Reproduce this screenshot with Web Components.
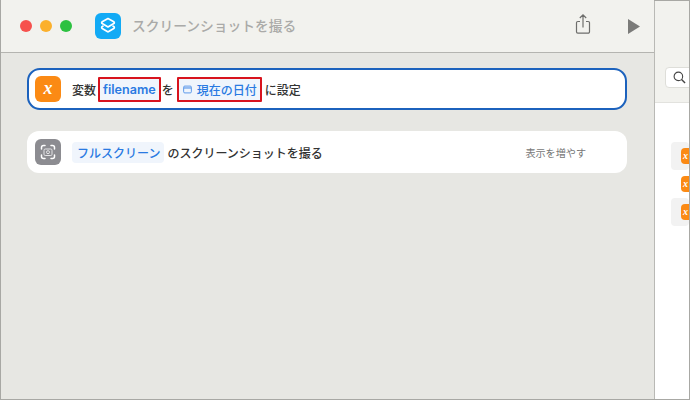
<!DOCTYPE html>
<html lang="ja"><head><meta charset="utf-8">
<style>
html,body{margin:0;padding:0;width:690px;height:400px;overflow:hidden;background:#e7e7e3}
body{font-family:Inter,"Noto Sans CJK JP",sans-serif}
</style></head><body>
<app-window>
  <title-bar slot="title" label="スクリーンショットを撮る"></title-bar>
  <action-card selected>
    <icon-tile slot="icon" color="#fb8a14">x</icon-tile>
    <span>変数</span>
    <var-token outlined style="margin-left:2px;--fs:12.6px;--fw:600">filename</var-token>
    <span style="margin-left:1px">を</span>
    <var-token outlined style="margin-left:3px;--pad-left:4px"><svg slot="lead" viewBox="0 0 10 10" width="9" height="9"><rect x=".7" y="1.2" width="8.6" height="7.6" rx="1.3" fill="none" stroke="#4d8fe8" stroke-width="1"/><path d="M1 3.3h8" stroke="#4d8fe8" stroke-width="1.2"/></svg>現在の日付</var-token>
    <span style="margin-left:3px">に設定</span>
  </action-card>
  <action-card more="表示を増やす">
    <svg slot="icon" viewBox="0 0 26 26" width="26" height="26"><rect width="26" height="26" rx="6" fill="#8c8c91"/><path d="M6.5 10V8.5a2 2 0 0 1 2-2H10M16 6.5h1.5a2 2 0 0 1 2 2V10M19.5 16v1.5a2 2 0 0 1-2 2H16M10 19.5H8.5a2 2 0 0 1-2-2V16" fill="none" stroke="#fff" stroke-width="1.5" stroke-linecap="round"/><rect x="9" y="10" width="8" height="6.5" rx="1.2" fill="none" stroke="#e4e4e6" stroke-width="1"/><circle cx="13" cy="13.2" r="1.5" fill="none" stroke="#e4e4e6" stroke-width="1"/></svg>
    <var-token style="--pad-left:5px;--pad-right:4px">フルスクリーン</var-token>
    <span style="margin-left:3px">のスクリーンショットを撮る</span>
  </action-card>
  <side-pane slot="side"></side-pane>
</app-window>
<script>
class AppWindow extends HTMLElement{constructor(){super();this.attachShadow({mode:'open'}).innerHTML=`<style>
:host{display:grid;grid-template-columns:653px 1fr;grid-template-rows:53px 1fr;width:690px;height:400px;box-sizing:border-box;border:1px solid #a8a8a4;background:#e7e7e3}
.title{grid-column:1/2;grid-row:1}
.main{grid-column:1;grid-row:2;display:flex;flex-direction:column;gap:21px;padding:14px 0 0 26px;box-sizing:border-box}
.side{grid-column:2;grid-row:1/3;border-left:1px solid #b9b9b5;min-width:0}
</style><div class="title"><slot name="title"></slot></div><div class="main"><slot></slot></div><div class="side"><slot name="side"></slot></div>`}}
class TitleBar extends HTMLElement{constructor(){super();this.attachShadow({mode:'open'}).innerHTML=`<style>
:host{display:flex;align-items:center;box-sizing:border-box;background:#f2f2ee;border-bottom:1px solid #b4b4b0;padding-left:19px;margin-top:-1px;height:53px;font:500 13.75px "Noto Sans CJK JP",sans-serif;color:#aaaaa8}
.l{width:12px;height:12px;border-radius:50%;margin-right:8px}
.app{margin-left:23px;margin-right:11px;display:block}
.txt{margin-bottom:2px}
.sp{flex:1}
.share{margin-right:37px;display:block;margin-bottom:4px}
.play{margin-right:14px;display:block}
</style>
<i class="l" style="background:#f6514d"></i><i class="l" style="background:#fbb02c"></i><i class="l" style="background:#2cc140;margin-right:0"></i>
<svg class="app" viewBox="0 0 26 26" width="26" height="26"><rect width="26" height="26" rx="6" fill="#12aaf5"/><path d="M13 5.5l5.800 3.300c.7.400.7 1.400 0 1.800L13 14l-5.800-3.400c-.7-.4-.7-1.400 0-1.800z" fill="none" stroke="#fff" stroke-width="1.700" stroke-linejoin="round"/><path d="M8.500 12.800l-1.300.8c-.7.400-.7 1.400 0 1.800l5.100 3.100c.4.300 1 .3 1.400 0l5.100-3.100c.7-.4.700-1.400 0-1.800l-1.300-.8" fill="none" stroke="#fff" stroke-width="1.700"/></svg>
<span class="txt">${this.getAttribute('label')}</span><span class="sp"></span>
<svg class="share" viewBox="0 0 16 22" width="16" height="22"><path d="M5 8.500H2.800A1.300 1.300 0 0 0 1.500 9.800v9a1.300 1.300 0 0 0 1.300 1.300h10.400a1.300 1.300 0 0 0 1.300-1.300v-9a1.300 1.300 0 0 0-1.300-1.300H11M8 14.500V2M4.800 5L8 1.800 11.200 5" fill="none" stroke="#6e6e6c" stroke-width="1.200"/></svg>
<svg class="play" viewBox="0 0 12 15" width="12" height="15"><path d="M0 0l12 7.500-12 7.500z" fill="#7b7b79"/></svg>`}}
class IconTile extends HTMLElement{constructor(){super();this.attachShadow({mode:'open'}).innerHTML=`<style>
:host{display:flex;align-items:center;justify-content:center;width:26px;height:26px;border-radius:6px;background:${this.getAttribute('color')};color:#fff;font:italic 700 18px/22px "Liberation Serif",serif;padding-bottom:3px;box-sizing:border-box}
</style><slot></slot>`}}
class ActionCard extends HTMLElement{constructor(){super();const m=this.getAttribute('more');this.attachShadow({mode:'open'}).innerHTML=`<style>
:host{display:flex;align-items:center;width:600px;height:42px;box-sizing:border-box;background:#fff;border-radius:12px;padding-left:8px;font:500 12px "Noto Sans CJK JP",sans-serif;color:#333}
:host([selected]){border:2px solid #1c62bd;border-radius:13px;padding-left:6px}
.i{display:flex;margin-right:11px}
.sp{flex:1}
.more{font-size:10.1px;font-weight:400;color:#777;margin-right:41px}
</style><span class="i"><slot name="icon"></slot></span><slot></slot><span class="sp"></span>${m?`<span class="more">${m}</span>`:''}`}}
class VarToken extends HTMLElement{constructor(){super();this.attachShadow({mode:'open'}).innerHTML=`<style>
:host{display:inline-flex;align-items:center;gap:5px;height:21px;padding:0 var(--pad-right,3px) 0 var(--pad-left,3px);background:#f0f5fc;border-radius:4px;color:#2a7ae2;font:var(--fw,500) var(--fs,12px) Inter,"Noto Sans CJK JP",sans-serif;box-sizing:content-box}
:host([outlined]){height:21px;border:2px solid #d8141e;border-radius:1px}
::slotted(svg){display:block}
</style><slot name="lead"></slot><slot></slot>`}}
class SidePane extends HTMLElement{constructor(){super();this.attachShadow({mode:'open'}).innerHTML=`<style>
:host{display:block;height:100%;background:#fff;overflow:hidden}
.head{height:102px;box-sizing:border-box;background:#f2f2ee;border-bottom:1px solid #e2e2de;padding:66px 0 0 10px;margin-bottom:39px}
.search{width:60px;height:21px;box-sizing:border-box;background:#fff;border:1px solid #deded9;border-radius:4px;padding:3px 0 0 7px}
.search svg{display:block}
.row{height:28px;margin-left:16px;border-radius:4px;padding-left:10px;display:flex;align-items:center}
.row.g{background:#f2f2f2}
.x{width:16px;height:16px;border-radius:4px;background:#fb8a14;flex:none;color:#fff;font:italic 700 10px "Liberation Serif",serif;line-height:16px;padding-left:2px;box-sizing:border-box}
</style><div class="head"><div class="search"><svg viewBox="0 0 14 14" width="13" height="13"><circle cx="5.800" cy="5.800" r="4.600" fill="none" stroke="#444" stroke-width="1.200"/><path d="M9.200 9.200l3.800 3.800" stroke="#444" stroke-width="1.500"/></svg></div></div>
<div class="row g"><span class="x">x</span></div><div class="row"><span class="x">x</span></div><div class="row g"><span class="x">x</span></div>`}}
customElements.define('app-window',AppWindow);customElements.define('title-bar',TitleBar);customElements.define('icon-tile',IconTile);customElements.define('action-card',ActionCard);customElements.define('var-token',VarToken);customElements.define('side-pane',SidePane);
</script>
</body></html>
